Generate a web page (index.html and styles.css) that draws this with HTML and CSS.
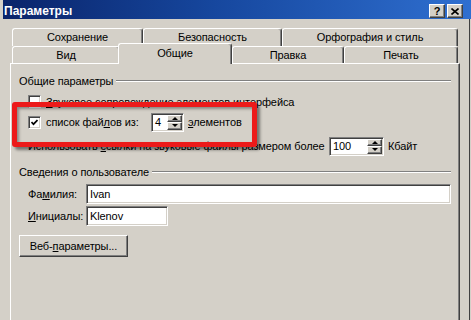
FILE: index.html
```html
<!DOCTYPE html>
<html lang="ru">
<head>
  <meta charset="UTF-8">
  <title>Параметры</title>
  <link rel="stylesheet" href="styles.css">
</head>
<body>
  <div class="window">
    <!-- Заголовок окна -->
    <div class="titlebar">
      <span class="title">Параметры</span>
      <div class="title-btns">
        <span class="tbtn">?</span>
        <span class="tbtn">
          <svg width="8" height="7" viewBox="0 0 8 7"><path d="M0.5 0.5L7.5 6.5M7.5 0.5L0.5 6.5" stroke="#000" stroke-width="1.6"/></svg>
        </span>
      </div>
    </div>

    <div class="dialog">
      <!-- Вкладки -->
      <div class="tabs">
        <div class="tab-row back">
          <div class="tab t-save">Сохранение</div>
          <div class="tab t-sec">Безопасность</div>
          <div class="tab t-spell">Орфография и стиль</div>
        </div>
        <div class="tab-row front">
          <div class="tab t-view">Вид</div>
          <div class="tab t-gen active">Общие</div>
          <div class="tab t-edit">Правка</div>
          <div class="tab t-print">Печать</div>
        </div>
      </div>

      <div class="panel">
        <div class="group-title">Общие параметры</div>
        <div class="row r-sound">
          <span class="check"></span>
          <span><u>З</u>вуковое сопровождение элементов интерфейса</span>
        </div>
        <div class="row r-files">
          <span class="check"><svg width="7" height="7" viewBox="0 0 7 7"><path d="M0.5 3L2.5 5.2L6.5 1" fill="none" stroke="#000" stroke-width="1.7"/></svg></span>
          <span class="lbl-files">список фай<u>л</u>ов из:</span>
          <span class="spin s-files">
            <span class="spin-val">4</span>
            <span class="spin-btns"><span class="up"></span><span class="down"></span></span>
          </span>
          <span class="after"><u>э</u>лементов</span>
        </div>
        <div class="row r-links">
          <span class="lbl-links">Использовать <u>с</u>сылки на звуковые файлы размером более</span>
          <span class="spin s-size">
            <span class="spin-val">100</span>
            <span class="spin-btns"><span class="up"></span><span class="down"></span></span>
          </span>
          <span class="after">Кбайт</span>
        </div>

        <div class="group-title g-user">Сведения о пользователе</div>
        <div class="row r-name">
          <span class="field-lbl">Фа<u>м</u>илия:</span>
          <span class="field f-name">Ivan</span>
        </div>
        <div class="row r-init">
          <span class="field-lbl"><u>И</u>нициалы:</span>
          <span class="field f-init">Klenov</span>
        </div>
        <div class="btn web-btn">Веб-<u>п</u>араметры...</div>
      </div>
    </div>

    <!-- Красная рамка-выделение -->
    <div class="highlight"></div>
  </div>
</body>
</html>
```

FILE: styles.css
```css
/* Общие стили */
* { box-sizing: border-box; }
body {
  margin: 0;
  font-family: "Liberation Sans", Arial, sans-serif;
  font-size: 11px;
  letter-spacing: -0.1px;
  color: #000;
  background: #d4d0c8;
}
u { text-decoration: underline; }

.window {
  position: relative;
  width: 471px;
  height: 320px;
  overflow: hidden;
  padding-left: 3px;
  background: #d4d0c8;
}

/* Заголовок */
.titlebar {
  height: 19px;
  padding: 3px 8px 0 1px;
  display: flex;
  justify-content: space-between;
  align-items: center;
  background-color: #0a246a;
  background-image: linear-gradient(to right, #0a246a 0%, #16479e 45%, #2f6fd0 100%);
  color: #fff;
}
.title { font-weight: bold; font-size: 12px; line-height: 16px; letter-spacing: 0; }
.title-btns { display: flex; gap: 2px; }
.tbtn {
  width: 16px;
  height: 14px;
  display: flex;
  align-items: center;
  justify-content: center;
  background: #d4d0c8;
  color: #000;
  font-weight: bold;
  font-size: 11px;
  border: 1px solid;
  border-color: #fff #404040 #404040 #fff;
  box-shadow: inset -1px -1px #808080;
}

.dialog {
  height: 301px;
  margin-right: 1px;
  border-right: 1px solid #404040;
  padding: 9px 9px 0 7px;
}

/* Вкладки */
.tabs { margin-left: 2px; width: 446px; }
.tab-row { display: flex; }
.tab-row.back { height: 18px; }
.tab-row.front { height: 17px; align-items: flex-end; }
.tab {
  height: 100%;
  text-align: center;
  line-height: 16px;
  background: #d4d0c8;
  border: 1px solid;
  border-bottom: 0;
  border-color: #fff #404040 #fff #fff;
  border-radius: 3px 3px 0 0;
  box-shadow: inset -1px 0 #808080;
}
.tab.active {
  position: relative;
  z-index: 1;
  height: 21px;
  margin: -3px 0 -1px -2px;
  line-height: 18px;
}
.t-save { width: 131px; }
.t-sec { width: 139px; }
.t-spell { width: 176px; }
.t-view { width: 108px; }
.t-gen { width: 114px; }
.t-edit { width: 112px; }
.t-print { width: 114px; }

/* Панель */
.panel {
  height: 260px;
  padding: 10px 8px 0 8px;
  border: 1px solid;
  border-color: #fff #404040 #404040 #fff;
  box-shadow: inset -1px 0 #808080;
}
.group-title {
  display: flex;
  align-items: center;
  height: 14px;
  line-height: 14px;
}
.group-title::after {
  content: "";
  flex: 1;
  margin-left: 3px;
  border-top: 1px solid #808080;
  border-bottom: 1px solid #fff;
}
.g-user { margin-top: 9px; }

.row {
  display: flex;
  align-items: center;
  height: 20px;
  padding-left: 9px;
  white-space: nowrap;
}
.r-sound { margin-top: 3px; height: 21px; }
.r-links { margin-top: 4px; }
.r-name { margin-top: 5px; }
.r-init { margin-top: 2px; }

.check {
  flex: none;
  width: 13px;
  height: 13px;
  margin-right: 5px;
  display: flex;
  align-items: center;
  justify-content: center;
  background: #fff;
  border: 1px solid;
  border-color: #808080 #fff #fff #808080;
  box-shadow: inset 1px 1px #404040, inset -1px -1px #d4d0c8;
}

/* Поля со счётчиком */
.lbl-files { width: 105px; }
.lbl-links { width: 301px; }
.after { margin-left: 4px; }
.spin {
  flex: none;
  display: flex;
  height: 19px;
  padding: 1px;
  background: #fff;
  border: 1px solid;
  border-color: #808080 #fff #fff #808080;
  box-shadow: inset 1px 1px #404040, inset -1px -1px #d4d0c8;
}
.s-files { width: 33px; }
.s-size { width: 55px; }
.spin-val { flex: 1; padding-left: 2px; line-height: 15px; }
.spin-btns { width: 15px; display: flex; flex-direction: column; }
.spin-btns span {
  flex: 1;
  display: flex;
  align-items: center;
  justify-content: center;
  background: #d4d0c8;
  border: 1px solid;
  border-color: #fff #404040 #404040 #fff;
  box-shadow: inset -1px -1px #808080;
}
.spin-btns span::before {
  content: "";
  border-left: 3px solid transparent;
  border-right: 3px solid transparent;
}
.spin-btns .up::before { border-bottom: 3px solid #000; }
.spin-btns .down::before { border-top: 3px solid #000; }

/* Сведения о пользователе */
.field-lbl { width: 58px; }
.field {
  height: 20px;
  padding-left: 3px;
  line-height: 18px;
  background: #fff;
  border: 1px solid;
  border-color: #808080 #fff #fff #808080;
  box-shadow: inset 1px 1px #404040, inset -1px -1px #d4d0c8;
}
.f-name { width: 365px; }
.f-init { width: 82px; }

.btn {
  width: 109px;
  height: 22px;
  text-align: center;
  line-height: 20px;
  border: 1px solid;
  border-color: #fff #404040 #404040 #fff;
  box-shadow: inset -1px -1px #808080;
}
.web-btn { margin-top: 9px; }

.highlight {
  position: absolute;
  left: 12px;
  top: 102px;
  width: 245px;
  height: 45px;
  border: 5px solid #ec1a1a;
  border-radius: 3px;
  box-shadow: 3px 3px 3px rgba(0, 0, 0, 0.45), inset 2px 2px 3px rgba(0, 0, 0, 0.35);
}
```
